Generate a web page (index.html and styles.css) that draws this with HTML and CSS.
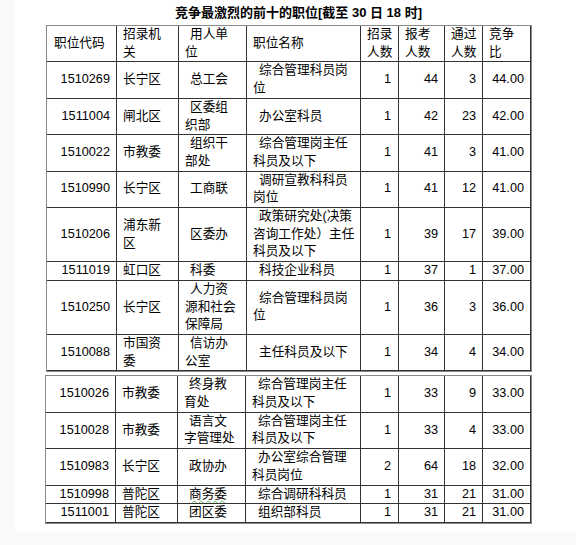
FILE: index.html
```html
<!DOCTYPE html>
<html lang="zh-CN">
<head>
<meta charset="utf-8">
<title>竞争最激烈的前十的职位</title>
<link rel="stylesheet" href="styles.css">
</head>
<body>
<div class="page">
  <div class="title">竞争最激烈的前十的职位[截至 30 日 18 时]</div>
  <table class="grid t1">
    <tr class="head">
      <td>职位代码</td><td>招录机<br>关</td><td>用人单<br>位</td><td>职位名称</td><td>招录<br>人数</td><td>报考<br>人数</td><td>通过<br>人数</td><td>竞争<br>比</td>
    </tr>
    <tr><td>1510269</td><td>长宁区</td><td>总工会</td><td>综合管理科员岗<br>位</td><td>1</td><td>44</td><td>3</td><td>44.00</td></tr>
    <tr><td>1511004</td><td>闸北区</td><td>区委组<br>织部</td><td>办公室科员</td><td>1</td><td>42</td><td>23</td><td>42.00</td></tr>
    <tr><td>1510022</td><td>市教委</td><td>组织干<br>部处</td><td>综合管理岗主任<br>科员及以下</td><td>1</td><td>41</td><td>3</td><td>41.00</td></tr>
    <tr><td>1510990</td><td>长宁区</td><td>工商联</td><td>调研宣教科科员<br>岗位</td><td>1</td><td>41</td><td>12</td><td>41.00</td></tr>
    <tr><td>1510206</td><td>浦东新<br>区</td><td>区委办</td><td>政策研究处(决策<br>咨询工作处）主任<br>科员及以下</td><td>1</td><td>39</td><td>17</td><td>39.00</td></tr>
    <tr><td>1511019</td><td>虹口区</td><td>科委</td><td>科技企业科员</td><td>1</td><td>37</td><td>1</td><td>37.00</td></tr>
    <tr><td>1510250</td><td>长宁区</td><td>人力资<br>源和社会<br>保障局</td><td>综合管理科员岗<br>位</td><td>1</td><td>36</td><td>3</td><td>36.00</td></tr>
    <tr><td>1510088</td><td>市国资<br>委</td><td>信访办<br>公室</td><td>主任科员及以下</td><td>1</td><td>34</td><td>4</td><td>34.00</td></tr>
  </table>
  <table class="grid t2">
    <tr><td>1510026</td><td>市教委</td><td>终身教<br>育处</td><td>综合管理岗主任<br>科员及以下</td><td>1</td><td>33</td><td>9</td><td>33.00</td></tr>
    <tr><td>1510028</td><td>市教委</td><td>语言文<br>字管理处</td><td>综合管理岗主任<br>科员及以下</td><td>1</td><td>33</td><td>4</td><td>33.00</td></tr>
    <tr><td>1510983</td><td>长宁区</td><td>政协办</td><td>办公室综合管理<br>科员岗位</td><td>2</td><td>64</td><td>18</td><td>32.00</td></tr>
    <tr><td>1510998</td><td>普陀区</td><td><span class="spell">商务委</span></td><td>综合调研科科员</td><td>1</td><td>31</td><td>21</td><td>31.00</td></tr>
    <tr><td>1511001</td><td>普陀区</td><td>团区委</td><td>组织部科员</td><td>1</td><td>31</td><td>21</td><td>31.00</td></tr>
  </table>
</div>
</body>
</html>
```
FILE: styles.css
```css
html, body {
  margin: 0;
  padding: 0;
}
body {
  background: #fafafa;
  font-family: "Liberation Sans", "Noto Sans CJK SC", sans-serif;
  font-size: 12.7px;
  color: #000;
}
.page {
  margin-left: 15px;
  height: 532px;
  background: #fff;
  padding-top: 4px;
  box-sizing: border-box;
}
.title {
  font-weight: bold;
  font-size: 13px;
  line-height: 18px;
  margin: 0 0 3px 160px;
  white-space: nowrap;
}
.grid {
  border-collapse: separate;
  border-spacing: 0;
  table-layout: fixed;
  border: 1px solid #8a8a8a;
}
.t1 {
  width: 486px;
  margin-left: 31px;
}
.t2 {
  width: 487px;
  margin-left: 30px;
  margin-top: 3px;
}
.grid td {
  box-sizing: border-box;
  border-right: 1px solid #333;
  border-bottom: 1px solid #333;
  padding: 0 6px;
  line-height: 17.7px;
  white-space: nowrap;
  overflow: hidden;
  vertical-align: middle;
  text-align: left;
}
.grid td:nth-child(1) { width: 70px; text-align: right; }
.grid td:nth-child(2) { width: 62px; }
.grid td:nth-child(3) { width: 68px; text-indent: 5px; }
.grid td:nth-child(4) { width: 114px; text-indent: 6px; }
.t2 td:nth-child(4) { width: 115px; }
.grid td:nth-child(5) { width: 38px; text-align: right; padding-right: 7px; }
.grid td:nth-child(6) { width: 46px; text-align: right; }
.grid td:nth-child(7) { width: 38px; text-align: right; }
.grid td:nth-child(8) { width: 48px; text-align: right; }
.grid .head td { text-align: left; }
.grid .head td:nth-child(1) { text-indent: 1px; }
.grid .head td:nth-child(4) { text-indent: 0; }
.grid .head td:nth-child(5) { padding-right: 6px; }
.spell {
  text-decoration: underline wavy #5cb85c;
  text-decoration-thickness: 1px;
  text-underline-offset: 2px;
}
```
